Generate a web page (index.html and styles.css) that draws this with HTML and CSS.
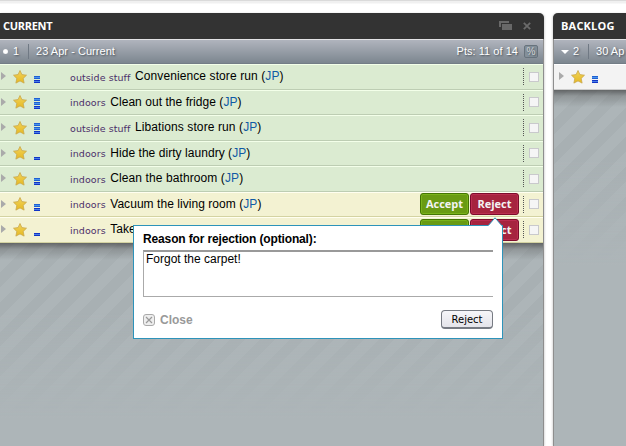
FILE: index.html
```html
<!DOCTYPE html>
<html lang="en">
<head>
<meta charset="utf-8">
<title>Iterations</title>
<link rel="stylesheet" href="styles.css">
</head>
<body>
<svg class="defs" width="0" height="0">
  <defs>
    <linearGradient id="gold" x1="0" y1="0" x2="0" y2="1"><stop offset="0" stop-color="#f2d45a"/><stop offset="1" stop-color="#e5b823"/></linearGradient>
    <symbol id="star" viewBox="0 0 14 14"><path d="M7 .5 8.9 4.6 13.5 5.2 10.2 8.4 11.1 13.1 7 10.9 2.9 13.1 3.8 8.4.5 5.2 5.1 4.6Z" fill="url(#gold)" stroke="#c9a74a" stroke-width=".8" stroke-linejoin="round"/></symbol>
  </defs>
</svg>
<div class="topline"></div>
<main class="board">
  <section class="panel current">
    <header class="title"><h2>CURRENT</h2>
      <svg class="copy" width="14" height="10" viewBox="0 0 14 10"><path d="M0 0h10v2H2v4H0z" fill="#686868"/><path d="M3 3h10v6H3z" fill="#686868"/></svg>
      <svg class="shut" width="8" height="8" viewBox="0 0 8 8"><path d="M.8.8 7.2 7.2M7.2.8.8 7.2" stroke="#6b6b6b" stroke-width="1.8"/></svg>
    </header>
    <div class="iteration"><i class="dot"></i><span class="num">1</span><span class="date">23 Apr - Current</span><span class="pts">Pts: 11 of 14</span><span class="pct">%</span></div>
    <ul class="stories">
      <li class="story done"><i class="arrow"></i><svg class="star"><use href="#star"/></svg><span class="bars"><b></b><b></b></span><span class="label">outside stuff</span><span class="name wide">Convenience store run (<a>JP</a>)</span><i class="check"></i></li>
      <li class="story done"><i class="arrow"></i><svg class="star"><use href="#star"/></svg><span class="bars"><b></b><b></b><b></b></span><span class="label">indoors</span><span class="name">Clean out the fridge (<a>JP</a>)</span><i class="check"></i></li>
      <li class="story done"><i class="arrow"></i><svg class="star"><use href="#star"/></svg><span class="bars"><b></b><b></b><b></b></span><span class="label">outside stuff</span><span class="name wide">Libations store run (<a>JP</a>)</span><i class="check"></i></li>
      <li class="story done"><i class="arrow"></i><svg class="star"><use href="#star"/></svg><span class="bars"><b></b></span><span class="label">indoors</span><span class="name">Hide the dirty laundry (<a>JP</a>)</span><i class="check"></i></li>
      <li class="story done"><i class="arrow"></i><svg class="star"><use href="#star"/></svg><span class="bars"><b></b><b></b></span><span class="label">indoors</span><span class="name wide">Clean the bathroom (<a>JP</a>)</span><i class="check"></i></li>
      <li class="story"><i class="arrow"></i><svg class="star"><use href="#star"/></svg><span class="bars"><b></b><b></b></span><span class="label">indoors</span><span class="name">Vacuum the living room (<a>JP</a>)</span><span class="act accept">Accept</span><span class="act reject">Reject</span><i class="check"></i></li>
      <li class="story"><i class="arrow"></i><svg class="star"><use href="#star"/></svg><span class="bars"><b></b></span><span class="label">indoors</span><span class="name">Take</span><span class="act accept">Accept</span><span class="act reject">Reject</span><i class="check"></i></li>
    </ul>
    <div class="empty"></div>
  </section>
  <section class="panel backlog">
    <header class="title"><h2>BACKLOG</h2></header>
    <div class="iteration"><i class="down"></i><span class="num">2</span><span class="date">30 Ap</span></div>
    <ul class="stories">
      <li class="story plain"><i class="arrow"></i><svg class="star"><use href="#star"/></svg><span class="bars"><b></b><b></b></span></li>
    </ul>
    <div class="empty"></div>
  </section>
</main>
<div class="popup">
  <svg class="tip" width="14" height="9" viewBox="0 0 14 9"><path d="M0 9 7 .8 14 9z" fill="#fff"/><path d="M.3 8.5 7 .8l6.7 7.7" fill="none" stroke="#2d93ba"/></svg>
  <div class="ask">Reason for rejection (optional):</div>
  <div class="field">Forgot the carpet!</div>
  <div class="foot">
    <svg width="12" height="12" viewBox="0 0 12 12"><rect x=".5" y=".5" width="11" height="11" rx="2.5" fill="#eee" stroke="#aaa"/><path d="M3 3l6 6M9 3 3 9" stroke="#999" stroke-width="1.2"/></svg>
    <span class="close">Close</span><span class="send">Reject</span>
  </div>
</div>
</body>
</html>
```
FILE: styles.css
```css
* { box-sizing: border-box; }
body { margin: 0; width: 626px; height: 446px; overflow: hidden; background: #fff; font: 12px/15px "Liberation Sans", Arial, sans-serif; color: #000; position: relative; }
.defs { position: absolute; }
.topline { height: 13px; background: linear-gradient(#dadada 0 1px, #f0f0f0 1px 3px, #fff 4px); }
.board { display: flex; gap: 9px; height: 433px; }
.panel { display: flex; flex-direction: column; flex: none; }
.current { width: 544px; border-right: 1px solid #8e8e8e; box-shadow: 1px 0 2px #ddd; border-radius: 0 5px 0 0; }
.backlog { width: 90px; border-left: 1px solid #8e8e8e; border-radius: 5px 0 0 0; box-shadow: -1px 0 2px #ddd; }
.title { height: 26px; display: flex; align-items: center; background: #333; padding-left: 3px; color: #fff; border-radius: inherit; }
.current .title { margin-right: -1px; padding-right: 13px; }
.backlog .title { margin-left: -1px; padding-left: 8px; }
h2 { margin: 0; flex: 1; font: bold 11px/14px "Open Sans", sans-serif; letter-spacing: .2px; }
.current h2 { letter-spacing: -.3px; }
.copy { margin-right: 10px; }
.iteration { height: 25px; display: flex; align-items: center; border-top: 1px solid #e2e2e4; border-bottom: 1px solid #737d86; background: linear-gradient(#b0b4bd, #7c868f); color: #fff; text-shadow: 1px 1px 2px #444c54; font-size: 11px; letter-spacing: .04px; }
.dot { width: 5px; height: 5px; border-radius: 50%; background: radial-gradient(#fff 40%, #dfe1e4); margin: 0 5px 0 3px; }
.down { border: 4px solid transparent; border-top-color: #fff; border-bottom: 0; margin: 0 4px 0 7px; }
.num { width: 16px; border-right: 1px solid #707984; }
.date { flex: 1; margin-left: 7px; white-space: nowrap; }
.pts { margin-right: 6px; }
.pct { width: 14px; height: 13px; line-height: 12px; border: 1px solid #68737d; border-radius: 2px; background: #84909a; text-align: center; color: #d2d5d8; font-size: 10px; margin-right: 5px; }
.stories { list-style: none; margin: 0; padding: 0; }
.story { height: 25.5px; display: flex; align-items: center; background: #f3f2d2; border-top: 1px solid #fffff0; border-bottom: 1px solid #d4d3a2; padding-right: 4px; }
.done { background: #dbebd1; border-top-color: #f3ffe9; border-bottom-color: #bdcdb3; }
.plain { background: #f3f3f3; border-top-color: #fff; border-bottom-color: #ccc; }
.arrow { border: 4px solid transparent; border-left: 5px solid #aaa; border-right: 0; margin: 0 7px 1px 1px; }
.backlog .arrow { margin-left: 5px; }
.star { width: 14px; height: 14px; flex: none; }
.bars { width: 6px; height: 11px; display: flex; flex-direction: column; justify-content: flex-end; gap: 1px; margin: 2px 30px 0 7px; }
.bars b { height: 3px; background: linear-gradient(#1f5fd4 0 1px, #4a96ea 1px 2px, #1f5fd4 2px); }
.bars b:last-child { background: linear-gradient(#1134c6 0 1px, #4a7fe5 1px 2px, #1134c6 2px); }
.label { font: 9.5px/15px "DejaVu Sans", sans-serif; letter-spacing: .08px; color: #4b2e69; margin: 1px 4.5px 0 0; white-space: nowrap; }
.name { flex: 1; white-space: nowrap; letter-spacing: .05px; }
.wide { letter-spacing: .1px; }
.name a { color: #105aa5; }
.act { width: 49px; height: 22px; margin-right: 1px; border-radius: 3px; color: #f3f3f3; font: bold 11px/20px "Open Sans", sans-serif; text-align: center; }
.accept { background: #699b13; border: 1px solid #447503; box-shadow: inset 0 0 0 1px #79b31b; }
.reject { background: #a6243f; border: 1px solid #7d0c2c; box-shadow: inset 0 0 0 1px #bb2e51; margin-right: 4px; }
.check { width: 16px; height: 17px; flex: none; border-left: 1px dotted #555; display: flex; align-items: center; justify-content: flex-end; }
.check::after { content: ""; box-sizing: border-box; width: 10px; height: 10px; border: 1px solid #c9c9cc; background: #f5f5f5; }
.empty { flex: 1; background: linear-gradient(rgba(60,60,60,.65), rgba(60,60,60,.25) 6px, rgba(60,60,60,0) 17px), linear-gradient(rgba(173,181,184,0) 70px, #adb5b8 175px), repeating-linear-gradient(135deg, #a8b0b3 0 10.5px, #adb5b8 10.5px 21px); }
.popup { position: absolute; left: 133px; top: 225px; width: 370px; height: 114px; background: #fff; border: 1px solid #2d93ba; padding: 6px 9px 0 9px; }
.tip { position: absolute; left: 354px; top: -9px; }
.ask { font-weight: bold; line-height: 14px; letter-spacing: -.14px; }
.field { height: 47px; margin-top: 4px; border: 1px solid #aaa; border-top: 2px solid #999; border-right: 0; padding: 0 2px; }
.foot { display: flex; align-items: center; margin-top: 13px; height: 19px; }
.close { flex: 1; margin: 2px 0 0 5px; font-weight: bold; color: #999; }
.send { width: 52px; height: 19px; border: 1px solid #777b83; border-bottom-width: 2px; border-radius: 4px; background: linear-gradient(#f6f6f9, #e4e4ea); font: 10px/18px "DejaVu Sans", sans-serif; text-align: center; }
```
